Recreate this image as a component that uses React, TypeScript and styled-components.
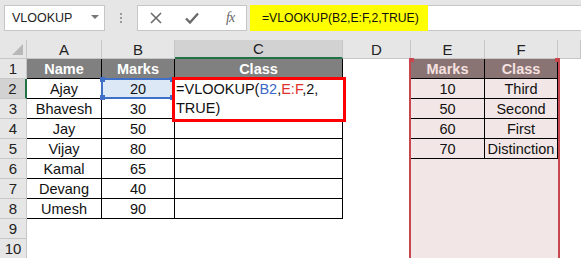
import React from 'react';
import styled, { createGlobalStyle } from 'styled-components';

const GlobalStyle = createGlobalStyle`
  html, body { margin: 0; padding: 0; background: #fff; }
  body { font-family: "Liberation Sans", Arial, sans-serif; overflow: hidden; }
`;

const COLS = [27, 75, 73, 168, 68, 74, 73, 23];
const ROW_H = 20;

const Page = styled.div`
  width: 581px; height: 258px; position: relative; overflow: hidden; background: #fff;
`;

/* ---------- formula bar ---------- */
const Toolbar = styled.div`
  height: 40px; background: #e6e6e6; display: flex; align-items: flex-start;
  padding: 5px 0 0 4px; box-sizing: border-box;
`;
const NameBox = styled.div`
  width: 101px; height: 26px; box-sizing: border-box; background: #fff; border: 1px solid #c6c6c6;
  display: flex; align-items: center; justify-content: space-between; padding: 0 5px 0 7px;
  font-size: 12.5px; color: #222;
`;
const Caret = styled.span`
  width: 0; height: 0; border-left: 4px solid transparent; border-right: 4px solid transparent;
  border-top: 4px solid #777; margin-top: -2px;
`;
const Dots = styled.div`
  width: 32px; height: 26px; display: flex; flex-direction: column; align-items: center;
  justify-content: center; gap: 2px;
  span { width: 2px; height: 2px; background: #9a9a9a; }
`;
const FxBox = styled.div`
  width: 110px; height: 26px; box-sizing: border-box; background: #fff; border: 1px solid #c6c6c6;
  display: flex; align-items: center; gap: 23px; padding: 0 0 0 12px;
`;
const FxText = styled.span`
  font-family: "Liberation Serif", "Times New Roman", serif; font-style: italic; font-size: 14px; color: #666;
  letter-spacing: -1px; margin-left: 4px;
`;
const FormulaInput = styled.div`
  flex: 1; height: 26px; margin-left: 3px; box-sizing: border-box; background: #fff;
  border-top: 1px solid #c6c6c6; border-bottom: 1px solid #c6c6c6; display: flex;
`;
const Highlight = styled.div`
  width: 178px; background: #ffff00; display: flex; align-items: center;
  padding-left: 12px; box-sizing: border-box; font-size: 12.2px; color: #111; margin-top: -1px; height: 26px;
`;

/* ---------- sheet ---------- */
const Sheet = styled.div`
  display: grid;
  grid-template-columns: ${COLS.map(c => `${c}px`).join(' ')};
  grid-template-rows: 19px repeat(10, ${ROW_H}px);
`;

const ColHead = styled.div<{ $sel?: boolean }>`
  background: ${p => (p.$sel ? '#d2d2d2' : '#e6e6e6')};
  border-right: 1px solid #c6c6c6;
  border-bottom: ${p => (p.$sel ? '2px solid #217346' : '1px solid #c6c6c6')};
  box-sizing: border-box; display: flex; align-items: center; justify-content: center;
  font-size: 15px; color: #222; position: relative;
`;
const CornerTri = styled.span`
  position: absolute; right: 3px; bottom: 3px; width: 0; height: 0;
  border-left: 11px solid transparent; border-bottom: 11px solid #b8b8b8;
`;
const RowHead = styled.div<{ $sel?: boolean }>`
  background: ${p => (p.$sel ? '#d2d2d2' : '#e6e6e6')};
  border-right: ${p => (p.$sel ? '2px solid #217346' : '1px solid #c6c6c6')};
  border-bottom: 1px solid #c6c6c6;
  box-sizing: border-box; display: flex; align-items: center; justify-content: center;
  font-size: 15px; color: #222;
`;

type CellProps = {
  $bg?: string; $color?: string; $bold?: boolean; $right?: boolean; $bottom?: boolean;
};
const Cell = styled.div<CellProps>`
  background: ${p => p.$bg || '#fff'};
  color: ${p => p.$color || '#111'};
  font-weight: ${p => (p.$bold ? 700 : 400)};
  border-right: ${p => (p.$right ? '1px solid #000' : 'none')};
  border-bottom: ${p => (p.$bottom ? '1px solid #000' : 'none')};
  box-sizing: border-box; display: flex; align-items: center; justify-content: center;
  font-size: 14.5px; white-space: nowrap;
`;

/* ---------- overlays ---------- */
const BlueSel = styled.div`
  position: absolute; left: 101px; top: 78px; width: 73px; height: 21px; box-sizing: border-box;
  border: 2px solid #3f6fc7;
  span { position: absolute; width: 5px; height: 5px; background: #3f6fc7; }
`;
const EditBox = styled.div`
  position: absolute; left: 172px; top: 77px; width: 174px; height: 45px; box-sizing: border-box;
  border: 3px solid #ff0000; background: #fff; padding: 0 0 0 1px;
  font-size: 14.5px; line-height: 19px; color: #111; white-space: nowrap;
`;
const Ref = styled.span<{ $c: string }>` color: ${p => p.$c}; `;
const RangeBox = styled.div`
  position: absolute; left: 409px; top: 59px; width: 151px; height: 210px; box-sizing: border-box;
  border-left: 2px solid #c8474f; border-right: 2px solid #c8474f;
  span { position: absolute; top: -1px; width: 5px; height: 4px; background: #c8474f; }
`;

const left = [
  ['Ajay', '20'], ['Bhavesh', '30'], ['Jay', '50'], ['Vijay', '80'],
  ['Kamal', '65'], ['Devang', '40'], ['Umesh', '90'],
];
const lookup = [['10', 'Third'], ['50', 'Second'], ['60', 'First'], ['70', 'Distinction']];

const PINK = '#f2e6e6';
const HEAD_BROWN = '#8a7473';

const App = () => {
  const rows: React.ReactNode[] = [];
  for (let r = 1; r <= 10; r++) {
    const cells: React.ReactNode[] = [];
    cells.push(<RowHead key="h" $sel={r === 2}>{r}</RowHead>);
    // A, B, C
    if (r === 1) {
      cells.push(<Cell key="a" $bg="#808080" $color="#fff" $bold $right $bottom>Name</Cell>);
      cells.push(<Cell key="b" $bg="#808080" $color="#fff" $bold $right $bottom>Marks</Cell>);
      cells.push(<Cell key="c" $bg="#808080" $color="#fff" $bold $right $bottom>Class</Cell>);
    } else if (r <= 8) {
      const d = left[r - 2];
      cells.push(<Cell key="a" $right $bottom>{d[0]}</Cell>);
      cells.push(<Cell key="b" $right $bottom $bg={r === 2 ? '#dde8f6' : undefined}>{d[1]}</Cell>);
      cells.push(<Cell key="c" $right $bottom />);
    } else {
      cells.push(<Cell key="a" />, <Cell key="b" />, <Cell key="c" />);
    }
    cells.push(<Cell key="d" />);
    // E, F
    if (r === 1) {
      cells.push(<Cell key="e" $bg={HEAD_BROWN} $color="#f5e1e0" $bold $right $bottom>Marks</Cell>);
      cells.push(<Cell key="f" $bg={HEAD_BROWN} $color="#f5e1e0" $bold $right $bottom>Class</Cell>);
    } else if (r <= 5) {
      const d = lookup[r - 2];
      cells.push(<Cell key="e" $bg={PINK} $right $bottom>{d[0]}</Cell>);
      cells.push(<Cell key="f" $bg={PINK} $right $bottom>{d[1]}</Cell>);
    } else {
      cells.push(<Cell key="e" $bg={PINK} />, <Cell key="f" $bg={PINK} />);
    }
    cells.push(<Cell key="g" />);
    rows.push(<React.Fragment key={r}>{cells}</React.Fragment>);
  }

  return (
    <Page>
      <GlobalStyle />
      <Toolbar>
        <NameBox>VLOOKUP<Caret /></NameBox>
        <Dots><span /><span /><span /></Dots>
        <FxBox>
          <svg width="12" height="12" viewBox="0 0 12 12">
            <path d="M1 1 L11 11 M11 1 L1 11" stroke="#6b6b6b" strokeWidth="1.6" fill="none" />
          </svg>
          <svg width="14" height="12" viewBox="0 0 14 12">
            <path d="M1 6.5 L5 10.5 L13 1.5" stroke="#6b6b6b" strokeWidth="2.4" fill="none" />
          </svg>
          <FxText>fx</FxText>
        </FxBox>
        <FormulaInput>
          <Highlight>=VLOOKUP(B2,E:F,2,TRUE)</Highlight>
        </FormulaInput>
      </Toolbar>
      <Sheet>
        <ColHead><CornerTri /></ColHead>
        {['A', 'B', 'C', 'D', 'E', 'F', ''].map(l => (
          <ColHead key={l || 'g'} $sel={l === 'C'}>{l}</ColHead>
        ))}
        {rows}
      </Sheet>
      <BlueSel>
        <span style={{ left: -3, top: -3 }} />
        <span style={{ left: -3, bottom: -3 }} />
        <span style={{ right: -3, top: -3 }} />
        <span style={{ right: -3, bottom: -3 }} />
      </BlueSel>
      <EditBox>
        =VLOOKUP(<Ref $c="#3d6ac4">B2</Ref>,<Ref $c="#e2302d">E:F</Ref>,2,
        <br />
        TRUE)
      </EditBox>
      <RangeBox>
        <span style={{ left: -2 }} />
        <span style={{ right: -2 }} />
      </RangeBox>
    </Page>
  );
};

export default App;
